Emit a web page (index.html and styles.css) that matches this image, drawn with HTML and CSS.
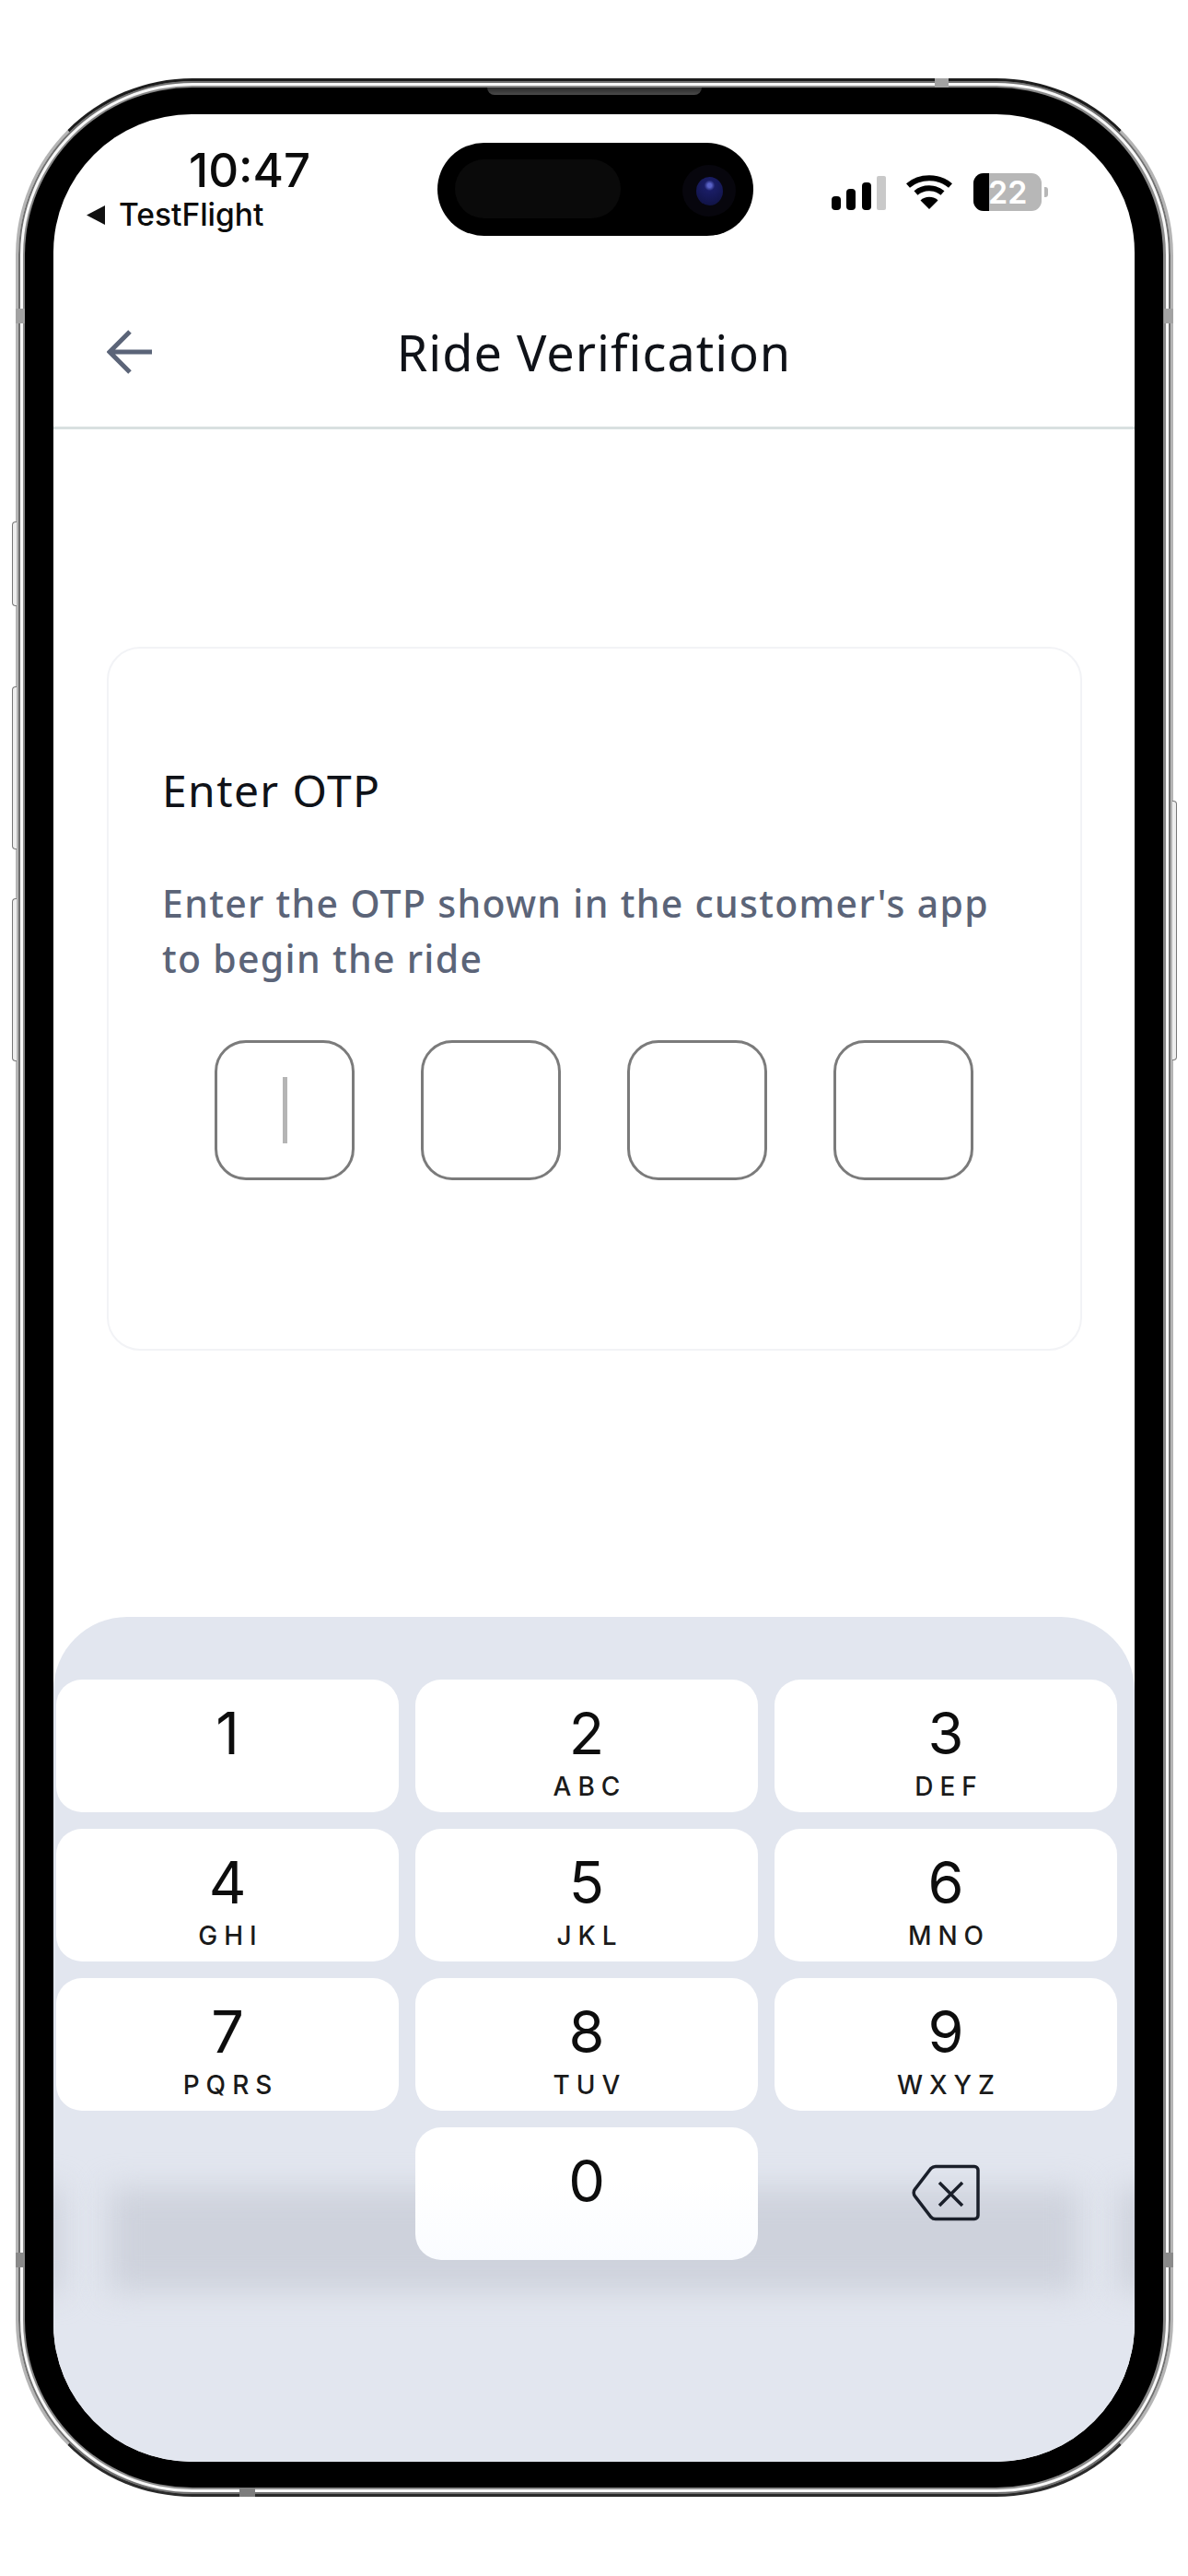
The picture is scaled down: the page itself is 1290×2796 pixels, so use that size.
FILE: index.html
```html
<!DOCTYPE html>
<html lang="en">
<head>
<meta charset="utf-8">
<title>Ride Verification</title>
<link rel="stylesheet" href="styles.css">
</head>
<body>
<div class="phone">
  <span class="side-btn btn-a"></span>
  <span class="side-btn btn-b"></span>
  <span class="side-btn btn-c"></span>
  <span class="side-btn btn-r"></span>
  <span class="notch n-top"></span>
  <span class="notch n-left-1"></span>
  <span class="notch n-right-1"></span>
  <span class="notch n-left-2"></span>
  <span class="notch n-right-2"></span>
  <span class="notch n-bottom"></span>
  <div class="bezel">
    <span class="speaker"></span>
    <div class="screen">
      <div class="island">
        <span class="island-pill"></span>
        <span class="camera"><span class="lens"></span></span>
      </div>
      <div class="status">
        <div class="status-left">
          <div class="time">10:47</div>
          <div class="back-app">
            <svg class="tri" viewBox="0 0 22 23" width="22" height="23"><path d="M1 11.500 21 1v21z" fill="#111"/></svg>
            <span>TestFlight</span>
          </div>
        </div>
        <div class="status-right">
          <svg class="signal" viewBox="0 0 60 38" width="60" height="38">
            <rect x="0" y="22" width="10" height="15" rx="4" fill="#000"/>
            <rect x="16" y="14" width="10" height="23" rx="4" fill="#000"/>
            <rect x="33" y="7" width="10" height="30" rx="4" fill="#000"/>
            <rect x="49" y="0" width="10" height="37" rx="2" fill="#c9c9c9"/>
          </svg>
          <svg class="wifi" viewBox="0 0 52 38" width="52" height="38">
            <path d="M3 12.500C15.500 1.500 36.500 1.500 49 12.500" fill="none" stroke="#000" stroke-width="6"/>
            <path d="M11.500 20.500C19.500 13.500 32.500 13.500 40.500 20.500" fill="none" stroke="#000" stroke-width="6"/>
            <path d="M26 38 16.500 28.500C21.500 23.500 30.500 23.500 35.500 28.500z" fill="#000"/>
          </svg>
          <div class="battery">
            <div class="cell"><span class="charge"></span><span class="pct">22</span></div>
            <span class="nub"></span>
          </div>
        </div>
      </div>
      <header class="topbar">
        <svg class="back" viewBox="0 0 50 48" width="50" height="48"><path d="M49 24H3M25 2 3 24l22 22" fill="none" stroke="#5b6478" stroke-width="5"/></svg>
        <h1 class="title">Ride Verification</h1>
      </header>
      <main class="content">
        <section class="card">
          <h2 class="card-title">Enter OTP</h2>
          <p class="card-desc">Enter the OTP shown in the customer's app to begin the ride</p>
          <div class="otp">
            <div class="otp-box"><span class="caret"></span></div>
            <div class="otp-box"></div>
            <div class="otp-box"></div>
            <div class="otp-box"></div>
          </div>
        </section>
      </main>
      <div class="keyboard">
        <span class="shade shade-main"></span>
        <span class="shade shade-l"></span>
        <span class="shade shade-r"></span>
        <div class="keys">
          <div class="key"><span class="num">1</span></div>
          <div class="key"><span class="num">2</span><span class="abc">ABC</span></div>
          <div class="key"><span class="num">3</span><span class="abc">DEF</span></div>
          <div class="key"><span class="num">4</span><span class="abc">GHI</span></div>
          <div class="key"><span class="num">5</span><span class="abc">JKL</span></div>
          <div class="key"><span class="num">6</span><span class="abc">MNO</span></div>
          <div class="key"><span class="num">7</span><span class="abc">PQRS</span></div>
          <div class="key"><span class="num">8</span><span class="abc">TUV</span></div>
          <div class="key"><span class="num">9</span><span class="abc">WXYZ</span></div>
          <div class="blank"></div>
          <div class="key key-zero"><span class="num">0</span></div>
          <div class="blank del">
            <svg viewBox="0 0 74 62" width="74" height="62">
              <path d="M26 2.500H68a4 4 0 0 1 4 4V55.500a4 4 0 0 1-4 4H26a7 7 0 0 1-5-2L4 35.500a6.500 6.500 0 0 1 0-9L21 4.500a7 7 0 0 1 5-2z" fill="none" stroke="#1a1f2a" stroke-width="3.500"/>
              <path d="M30 20 55 45M55 20 30 45" fill="none" stroke="#1a1f2a" stroke-width="3.500"/>
            </svg>
          </div>
        </div>
      </div>
    </div>
  </div>
</div>
</body>
</html>
```

FILE: styles.css
```css
* { box-sizing: border-box; }
html, body { margin: 0; padding: 0; background: #fff; }
body { width: 1290px; height: 2796px; padding: 85px 16px 0 17px; overflow: hidden; }

.phone {
  position: relative;
  width: 1257px;
  height: 2625px;
  padding: 7px 8px 7px 7px;
  border: 3px solid #b5b5b5;
  border-top-color: #1c1c1c;
  border-bottom-color: #2a2a2a;
  border-radius: 192px;
  background: #8a8a8a;
  box-shadow: inset 0 0 0 2px #707070, inset 0 0 0 5px #f8f8f8;
}
.bezel {
  position: relative;
  height: 100%;
  padding: 29px 31px 28px 31px;
  background: #000;
  border-radius: 182px;
}
.screen {
  position: relative;
  height: 100%;
  overflow: hidden;
  background: #fff;
  border-radius: 150px;
  display: flex;
  flex-direction: column;
}

.side-btn { position: absolute; width: 5px; background: #eee; border: 1px solid #777; }
.btn-a { left: -7px; top: 478px; height: 92px; border-right: 0; border-radius: 4px 0 0 4px; }
.btn-b { left: -7px; top: 657px; height: 177px; border-right: 0; border-radius: 4px 0 0 4px; }
.btn-c { left: -7px; top: 887px; height: 177px; border-right: 0; border-radius: 4px 0 0 4px; }
.btn-r { right: -7px; top: 781px; height: 282px; border-left: 0; border-radius: 0 4px 4px 0; }

.notch { position: absolute; background: #a2a2a2; }
.n-top { left: 995px; top: -3px; width: 15px; height: 10px; }
.n-bottom { left: 240px; bottom: -3px; width: 17px; height: 10px; background: #7d7d7d; }
.n-left-1, .n-right-1 { top: 247px; width: 10px; height: 16px; }
.n-left-2, .n-right-2 { top: 2357px; width: 10px; height: 16px; background: #8a8a8a; }
.n-left-1, .n-left-2 { left: -3px; }
.n-right-1, .n-right-2 { right: -3px; }

.speaker {
  position: absolute;
  left: 502px;
  top: 0;
  width: 233px;
  height: 8px;
  background: linear-gradient(#2a2a2a, #4a4a4a);
  border-radius: 0 0 10px 10px;
}

.island {
  position: absolute;
  left: 417px;
  top: 31px;
  width: 343px;
  height: 101px;
  background: #000;
  border-radius: 51px;
  z-index: 3;
}
.island-pill {
  position: absolute;
  left: 19px;
  top: 18px;
  width: 180px;
  height: 64px;
  background: #0a0a0a;
  border-radius: 32px;
}
.camera {
  position: absolute;
  left: 266px;
  top: 24px;
  width: 58px;
  height: 56px;
  border-radius: 50%;
  background: #07060d;
  display: flex;
  align-items: center;
  justify-content: center;
}
.lens {
  width: 29px;
  height: 31px;
  border-radius: 50%;
  background: radial-gradient(circle at 50% 30%, #5a62c8 0 8%, #1a1d66 22%, #111448 80%);
}

.status {
  height: 130px;
  flex: none;
  display: flex;
  justify-content: space-between;
  font-family: Inter, "Liberation Sans", sans-serif;
  color: #0b0b0b;
}
.status-left { padding: 36px 0 0 35px; }
.time {
  font-size: 51px;
  line-height: 50px;
  font-weight: 500;
  padding-left: 112px;
}
.back-app {
  display: flex;
  align-items: center;
  gap: 14px;
  font-size: 33.500px;
  line-height: 38px;
  font-weight: 500;
  margin-top: 4px;
}
.status-right {
  display: flex;
  align-items: flex-start;
  padding: 65px 94px 0 0;
}
.signal { margin-top: 2px; margin-right: 20px; }
.wifi { margin-right: 22px; }
.battery { display: flex; align-items: center; margin-top: -1px; }
.cell {
  position: relative;
  width: 74px;
  height: 41px;
  border-radius: 11px;
  background: #b7b7b7;
  overflow: hidden;
  color: #fff;
  font: 600 34px/41px Inter, "Liberation Sans", sans-serif;
}
.charge { position: absolute; left: 0; top: 0; bottom: 0; width: 17px; background: #000; }
.pct { position: absolute; left: 16px; top: 0; }
.nub { width: 4px; height: 11px; margin-left: 3px; background: #b7b7b7; border-radius: 0 3px 3px 0; }

.topbar {
  height: 212px;
  flex: none;
  position: relative;
  display: flex;
  align-items: center;
  justify-content: center;
  border-bottom: 3px solid #d9e0e0;
  padding-top: 46px;
}
.back { position: absolute; left: 58px; top: 104px; }
.title {
  margin: 0;
  font: 400 54px/64px "Noto Sans", sans-serif;
  letter-spacing: 1px;
  color: #0f1218;
}

.content { flex: 1; padding: 236px 57px 0 58px; }
.card {
  height: 764px;
  padding: 122px 60px 0 58px;
  border: 2px solid #f2f3f6;
  border-radius: 36px;
}
.card-title {
  margin: 0;
  font: 400 48px/64px "Noto Sans", sans-serif;
  letter-spacing: 1.400px;
  color: #0f1218;
}
.card-desc {
  max-width: 920px;
  margin: 60px 0 0;
  font: 500 41px/60px "Noto Sans", sans-serif;
  letter-spacing: 1.300px;
  color: #5b6478;
}
.otp { display: flex; gap: 72px; margin-top: 59px; padding-left: 57px; }
.otp-box {
  width: 152px;
  height: 152px;
  border: 3px solid #7b7b7b;
  border-radius: 34px;
  display: flex;
  align-items: center;
  justify-content: center;
}
.caret { width: 5px; height: 72px; background: #b5b5b5; }

.keyboard {
  position: relative;
  height: 917px;
  flex: none;
  padding: 68px 19px 0 3px;
  background: #e2e6ef;
  border-radius: 80px 80px 0 0;
  overflow: hidden;
  font-family: Inter, "Liberation Sans", sans-serif;
  color: #0d0d0d;
}
.shade { position: absolute; top: 620px; height: 112px; background: #ced2dc; filter: blur(16px); }
.shade-main { left: 60px; width: 1054px; }
.shade-l { left: -34px; width: 44px; }
.shade-r { right: -34px; width: 52px; }

.keys {
  position: relative;
  display: grid;
  grid-template-columns: repeat(3, 372px);
  grid-auto-rows: 144px;
  column-gap: 18px;
  row-gap: 18px;
}
.key {
  display: flex;
  flex-direction: column;
  align-items: center;
  padding-top: 22px;
  background: #fff;
  border-radius: 28px;
}
.key-zero { background: linear-gradient(#fff 40%, #fafcff); }
.num { font-size: 63px; line-height: 72px; font-weight: 400; }
.abc { font-size: 28px; line-height: 28px; font-weight: 500; letter-spacing: 7px; margin-right: -7px; margin-top: 8px; color: #1a1a1a; }
.blank { display: flex; justify-content: center; }
.del { padding-top: 40px; }
```
